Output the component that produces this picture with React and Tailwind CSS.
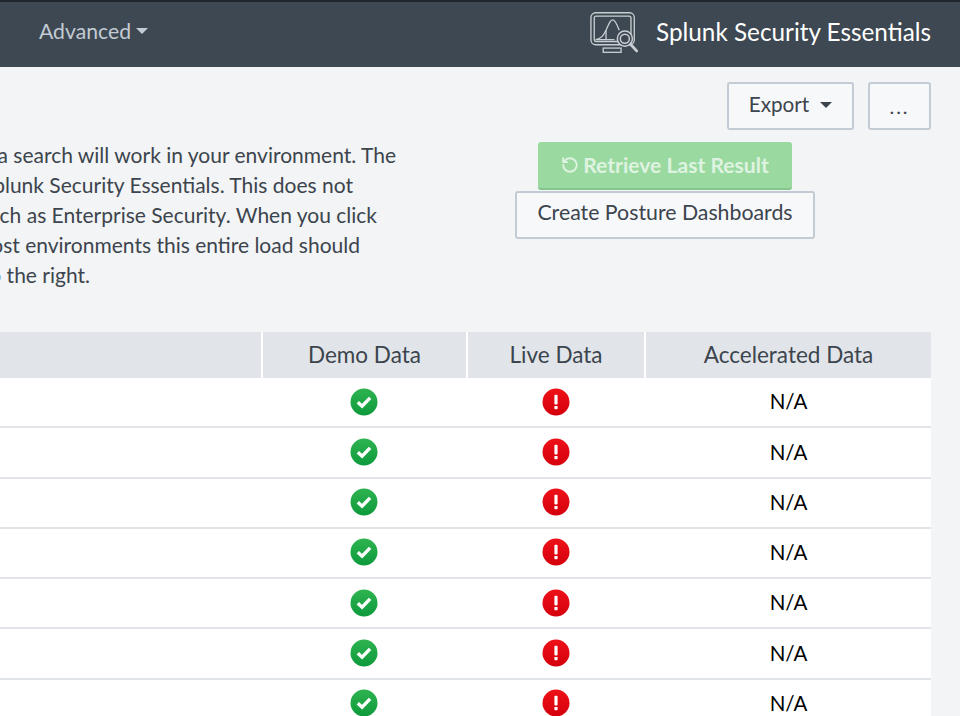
import React from 'react';
import { RotateCcw } from 'lucide-react';

const FONT = "font-['Lato','Open_Sans',sans-serif]";
const ROWS = [0, 1, 2, 3, 4, 5, 6];

// the lines run off the left edge of the page, so each is pinned by its right end
const INTRO_LINES = [
  { text: 'This page lets you check whether each data search will work in your environment. The', width: 'w-[396px]' },
  { text: 'The first pass runs every example shipped with Splunk Security Essentials. This does not', width: 'w-[353px]' },
  { text: 'It does not include content from other apps, such as Enterprise Security. When you click', width: 'w-[377px]' },
  { text: 'Start, the searches will all begin to load. In most environments this entire load should', width: 'w-[360px]' },
  { text: 'finish soon, with the results shown to the right.', width: 'w-[90px]' },
];

function StatusDefs() {
  return (
    <svg width="0" height="0" className="absolute">
      <defs>
        <linearGradient id="okFill" x1="0" y1="0" x2="0" y2="1">
          <stop offset="0" stopColor="#2fb350" />
          <stop offset="1" stopColor="#0d9a3c" />
        </linearGradient>
        <linearGradient id="badFill" x1="0" y1="0" x2="0" y2="1">
          <stop offset="0" stopColor="#ee1118" />
          <stop offset="1" stopColor="#d4000c" />
        </linearGradient>
      </defs>
    </svg>
  );
}

function CheckIcon() {
  return (
    <svg width="28" height="28" viewBox="0 0 28 28">
      <circle cx="14" cy="14" r="13.5" fill="url(#okFill)" />
      <path d="M7.8 14.2l4.3 4 8-8.4" fill="none" stroke="#fff" strokeWidth="3.4" />
    </svg>
  );
}

function AlertIcon() {
  return (
    <svg width="28" height="28" viewBox="0 0 28 28">
      <circle cx="14" cy="14" r="13.5" fill="url(#badFill)" />
      <rect x="12.4" y="6.8" width="3.2" height="9.6" rx="1" fill="#fff" />
      <rect x="12.4" y="18" width="3.2" height="3.2" rx="0.6" fill="#fff" />
    </svg>
  );
}

function Logo() {
  return (
    <svg width="49" height="44" viewBox="0 0 52 46" fill="none" stroke="#c9ced3" strokeWidth="1.4">
      <rect x="1" y="1.5" width="46" height="34" rx="5" />
      <rect x="4.5" y="5" width="39" height="27" rx="2" />
      <path d="M6 30c6-1 8-4 11-10s4-11 7-11 5 6 7 11" />
      <path d="M17 20v10M6 30h20" />
      <rect x="14" y="39" width="19" height="4.5" />
      <circle cx="37" cy="29" r="8" fill="#3d4852" strokeWidth="1.6" />
      <circle cx="37" cy="29" r="4.8" strokeWidth="1.6" />
      <path d="M43 35l6.5 7" strokeWidth="3" strokeLinecap="round" />
    </svg>
  );
}

export default function App() {
  return (
    <div className={`${FONT} flex h-[716px] w-[960px] flex-col overflow-hidden bg-[#f2f4f5] text-[#3c444d]`}>
      <StatusDefs />

      {/* Top bar */}
      <header className="flex h-[67px] shrink-0 items-center justify-between border-t-2 border-[#1f272c] bg-[#3d4852] pl-[39px] pr-[29px]">
        <div className="flex items-center gap-[5px] pb-[6px] text-[21.2px] text-[#c3cbd4]">
          Advanced
          <span className="h-0 w-0 border-x-[6px] border-t-[6px] border-x-transparent border-t-[#c3cbd4]" />
        </div>
        <div className="flex items-center gap-[17px] pb-[3px]">
          <Logo />
          <span className="pb-[2px] text-[24.3px] text-white">Splunk Security Essentials</span>
        </div>
      </header>

      {/* Export buttons */}
      <div className="flex justify-end gap-[14px] pr-[29px] pt-[15px]">
        <button className="flex h-[48px] w-[127px] items-center justify-center gap-[11px] rounded-[3px] border-2 border-[#c3cbd4] bg-[#f7f8fa] pb-[2px] text-[20.7px]">
          Export
          <span className="h-0 w-0 border-x-[6px] border-t-[6px] border-x-transparent border-t-[#3c444d]" />
        </button>
        <button className="h-[48px] w-[63px] rounded-[3px] border-2 border-[#c3cbd4] bg-[#f7f8fa] text-[20px] tracking-[2px]">...</button>
      </div>

      {/* Intro and actions */}
      <div className="mt-[12px] flex h-[190px] shrink-0">
        <div className="-mt-[2px] w-[515px] shrink-0 overflow-hidden whitespace-nowrap text-[21px] leading-[30px]">
          {INTRO_LINES.map((line) => (
            <p key={line.text} className={`flex justify-end ${line.width}`}>
              <span className="shrink-0">{line.text}</span>
            </p>
          ))}
        </div>
        <div className="flex w-[300px] flex-col items-center gap-px">
          <button className="flex h-[48px] w-[254px] items-center justify-center gap-1 rounded-[3px] border-b-2 border-[#86c48d] bg-[#9ad9a0] text-[21.1px] font-bold text-[#dff3e1]">
            <RotateCcw size={18} strokeWidth={2.5} />
            Retrieve Last Result
          </button>
          <button className="h-[48px] w-[300px] rounded-[3px] border-2 border-[#c3cbd4] bg-[#f7f8fa] pb-[4px] text-[21.3px]">
            Create Posture Dashboards
          </button>
        </div>
      </div>

      {/* Results table */}
      <div className="w-[931px]">
        <div className="flex h-[46px] gap-[2px] bg-white text-[22.5px]">
          <div className="w-[261px] bg-[#e1e5e9]" />
          <div className="flex w-[203px] items-center justify-center bg-[#e1e5e9]">Demo Data</div>
          <div className="flex w-[176px] items-center justify-center bg-[#e1e5e9]">Live Data</div>
          <div className="flex flex-1 items-center justify-center bg-[#e1e5e9]">Accelerated Data</div>
        </div>
        {ROWS.map((row) => (
          <div key={row} className="flex h-[50.25px] gap-[2px] border-b-2 border-[#e1e5e9] bg-white pb-px text-[20.5px] text-black">
            <div className="w-[261px]" />
            <div className="flex w-[203px] items-center justify-center pr-px"><CheckIcon /></div>
            <div className="flex w-[176px] items-center justify-center pr-px"><AlertIcon /></div>
            <div className="flex flex-1 items-center justify-center">N/A</div>
          </div>
        ))}
      </div>
    </div>
  );
}
